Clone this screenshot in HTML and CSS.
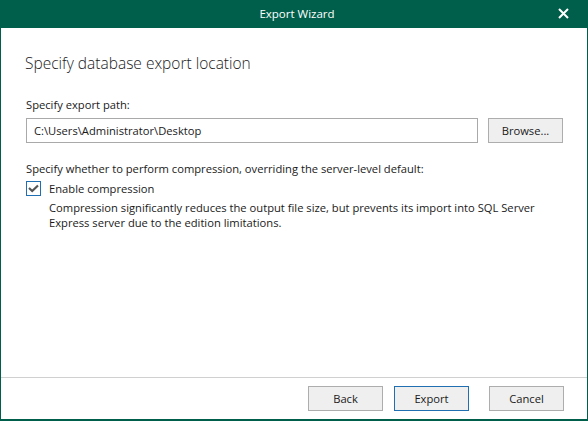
FILE: index.html
```html
<!DOCTYPE html>
<html>
<head>
<meta charset="utf-8">
<link rel="stylesheet" href="styles.css">
</head>
<body>
<div class="window">
  <div class="titlebar">
    <span class="title">Export Wizard</span>
    <span class="close">
      <svg width="11" height="11" viewBox="0 0 11 11"><path d="M1 1 L10 10 M10 1 L1 10" stroke="#ffffff" stroke-width="2"/></svg>
    </span>
  </div>
  <div class="content">
    <h1 class="heading">Specify database export location</h1>
    <div class="label">Specify export path:</div>
    <div class="path-row">
      <div class="input">C:\Users\Administrator\Desktop</div>
      <div class="btn browse">Browse...</div>
    </div>
    <div class="label compress-label">Specify whether to perform compression, overriding the server-level default:</div>
    <div class="check-row">
      <span class="checkbox">
        <svg width="11" height="9" viewBox="0 0 11 9"><path d="M1 4 L4.2 7 L10 1.5" fill="none" stroke="#555555" stroke-width="2.2"/></svg>
      </span>
      <span class="check-text">Enable compression</span>
    </div>
    <div class="desc">Compression significantly reduces the output file size, but prevents its import into SQL Server<br>Express server due to the edition limitations.</div>
  </div>
  <div class="footer">
    <div class="btn">Back</div>
    <div class="btn primary">Export</div>
    <div class="btn cancel">Cancel</div>
  </div>
</div>
</body>
</html>
```
FILE: styles.css
```css
html, body {
  margin: 0;
  padding: 0;
  background: #ffffff;
}
body {
  font-family: "Open Sans", "Noto Sans", sans-serif;
  font-size: 11.2px;
  color: #1a1a1a;
}
.window {
  width: 588px;
  height: 421px;
  box-sizing: border-box;
  border: 1px solid #005f4b;
  border-top: none;
  border-bottom-width: 2px;
  display: flex;
  flex-direction: column;
  background: #ffffff;
}
.titlebar {
  height: 28px;
  margin: 0 -1px;
  background: #005f4b;
  color: #ffffff;
  display: flex;
  align-items: center;
  justify-content: center;
  position: relative;
  flex-shrink: 0;
}
.title {
  font-size: 11.5px;
  line-height: 28px;
  padding-left: 6px;
}
.close {
  position: absolute;
  right: 19px;
  top: 8px;
  width: 11px;
  height: 11px;
  display: flex;
}
.content {
  flex: 1;
  padding: 0 23px 0 24px;
}
.heading {
  font-weight: 300;
  font-size: 15.5px;
  margin: 24px 0 0 0;
  line-height: 22px;
  color: #1a1a1a;
}
.label {
  margin-top: 23px;
  line-height: 16px;
  padding-left: 1px;
}
.path-row {
  display: flex;
  margin-top: 5px;
  padding-left: 1px;
}
.input {
  width: 452px;
  height: 25px;
  box-sizing: border-box;
  border: 1px solid #a9a9a9;
  padding-left: 7px;
  line-height: 23px;
}
.btn {
  width: 75px;
  height: 25px;
  box-sizing: border-box;
  border: 1px solid #adadad;
  background: #efefef;
  text-align: center;
  line-height: 23px;
}
.browse {
  margin-left: 10px;
}
.compress-label {
  margin-top: 18px;
}
.check-row {
  display: flex;
  align-items: center;
  margin-top: 3px;
  padding-left: 1px;
  height: 16px;
}
.checkbox {
  width: 15px;
  height: 15px;
  box-sizing: border-box;
  border: 1px solid #1f6fb2;
  display: flex;
  align-items: center;
  justify-content: center;
}
.check-text {
  margin-left: 8px;
}
.desc {
  margin-top: 4px;
  padding-left: 24px;
  line-height: 15px;
  white-space: nowrap;
}
.footer {
  height: 42px;
  flex-shrink: 0;
  border-top: 1px solid #d0d0d0;
  display: flex;
  justify-content: flex-end;
  align-items: flex-start;
  padding: 8px 23px 0 0;
  box-sizing: border-box;
}
.footer .btn + .btn {
  margin-left: 11px;
}
.footer .primary {
  border-color: #1f6fb2;
}
.footer .cancel {
  margin-left: 20px !important;
}
```
